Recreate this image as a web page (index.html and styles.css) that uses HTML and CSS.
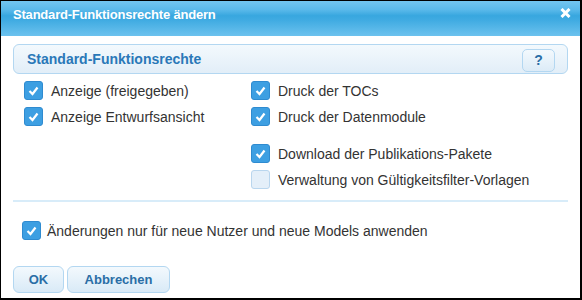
FILE: index.html
```html
<html>
<head>
<meta charset="UTF-8">
<title>Standard-Funktionsrechte ändern</title>
<link rel="stylesheet" href="styles.css">
</head>
<body>
<div class="dlg">
	<div class="dlgTitle">
		<span>Standard-Funktionsrechte ändern</span>
		<svg class="close" width="11" height="10" viewBox="0 0 11 10"><path d="M1.5 1 L9.5 9 M9.5 1 L1.5 9" stroke="#fff" stroke-width="3" stroke-linecap="butt"/></svg>
	</div>
	<div class="dlgBody">
		<div class="panelHead">
			<span>Standard-Funktionsrechte</span>
			<button class="help">?</button>
		</div>
		<div class="rights">
			<div class="col colA">
				<label class="row"><span class="cb on"></span>Anzeige (freigegeben)</label>
				<label class="row"><span class="cb on"></span>Anzeige Entwurfsansicht</label>
			</div>
			<div class="col">
				<label class="row"><span class="cb on"></span>Druck der TOCs</label>
				<label class="row"><span class="cb on"></span>Druck der Datenmodule</label>
				<label class="row gapTop"><span class="cb on"></span>Download der Publikations-Pakete</label>
				<label class="row"><span class="cb"></span>Verwaltung von Gültigkeitsfilter-Vorlagen</label>
			</div>
		</div>
		<div class="sep"></div>
		<label class="row onlyNew"><span class="cb on"></span>Änderungen nur für neue Nutzer und neue Models anwenden</label>
		<div class="btns">
			<button class="btn btnOk">OK</button>
			<button class="btn btnCancel">Abbrechen</button>
		</div>
	</div>
</div>
</body>
</html>
```

FILE: styles.css
```css
body {
	margin: 0;
	font-family: 'Liberation Sans', Arial, sans-serif;
	background-color: #ffffff;
}
.dlg {
	width: 579px;
	height: 297px;
	border: 1px solid #000000;
	border-right-width: 2px;
	border-bottom-width: 2px;
	background-color: #ffffff;
	overflow: hidden;
}
.dlgTitle {
	height: 35px;
	padding: 0 9px 0 12px;
	display: flex;
	align-items: flex-start;
	justify-content: space-between;
	background: linear-gradient(#73c5ef 0%, #5ab9ea 25%, #38a7df 42%, #40abe2 55%, #6cc2ee 100%);
	color: #ffffff;
	font-weight: bold;
	font-size: 13px;
	letter-spacing: -0.2px;
}
.dlgTitle span {
	margin-top: 6px;
}
.close {
	margin-top: 7px;
}
.dlgBody {
	padding: 0 12px;
}
.panelHead {
	margin-top: 8px;
	height: 28px;
	border: 1px solid #b3d7f1;
	border-radius: 6px;
	background: linear-gradient(#f3f9fd, #e2eef8);
	display: flex;
	align-items: center;
	justify-content: space-between;
	padding: 0 12px 0 13px;
	color: #2a78b8;
	font-weight: bold;
	font-size: 14px;
}
.help {
	width: 33px;
	height: 23px;
	margin-top: 2px;
	border: 1px solid #b3d7f1;
	border-radius: 5px;
	background: linear-gradient(#f3f9fd, #dcebf7);
	color: #2a6ea6;
	font-family: 'Liberation Sans', Arial, sans-serif;
	font-weight: bold;
	font-size: 14px;
	padding: 0;
}
.rights {
	display: flex;
	margin-top: 7px;
	padding-left: 11px;
}
.col {
	display: flex;
	flex-direction: column;
	gap: 7px;
}
.colA {
	width: 227px;
}
.row {
	display: flex;
	align-items: center;
	gap: 8px;
	height: 19px;
	font-size: 14px;
	color: #333333;
}
.gapTop {
	margin-top: 11px;
}
.cb {
	width: 17px;
	height: 17px;
	border: 1px solid #b9d6ee;
	border-radius: 3px;
	background-color: #e4eff9;
	flex: none;
}
.cb.on {
	border-color: #2f8bd0;
	background: #3d9fe2 url("data:image/svg+xml;utf8,<svg xmlns='http://www.w3.org/2000/svg' width='17' height='17'><path d='M4.5 9 L7.5 12 L12.5 5.5' fill='none' stroke='white' stroke-width='2.2'/></svg>") no-repeat center;
}
.sep {
	margin-top: 11px;
	height: 2px;
	background-color: #d8ecf9;
}
.onlyNew {
	margin-top: 19px;
	padding-left: 9px;
	gap: 6px;
}
.btns {
	display: flex;
	gap: 3px;
	margin-top: 26px;
}
.btn {
	height: 27px;
	border: 1px solid #b3d7f1;
	border-radius: 6px;
	background: linear-gradient(#f3f9fd, #d9eaf7);
	color: #2a6ea6;
	font-family: 'Liberation Sans', Arial, sans-serif;
	font-weight: bold;
	font-size: 13px;
	padding: 0;
}
.btnOk {
	width: 51px;
}
.btnCancel {
	width: 103px;
}
```
